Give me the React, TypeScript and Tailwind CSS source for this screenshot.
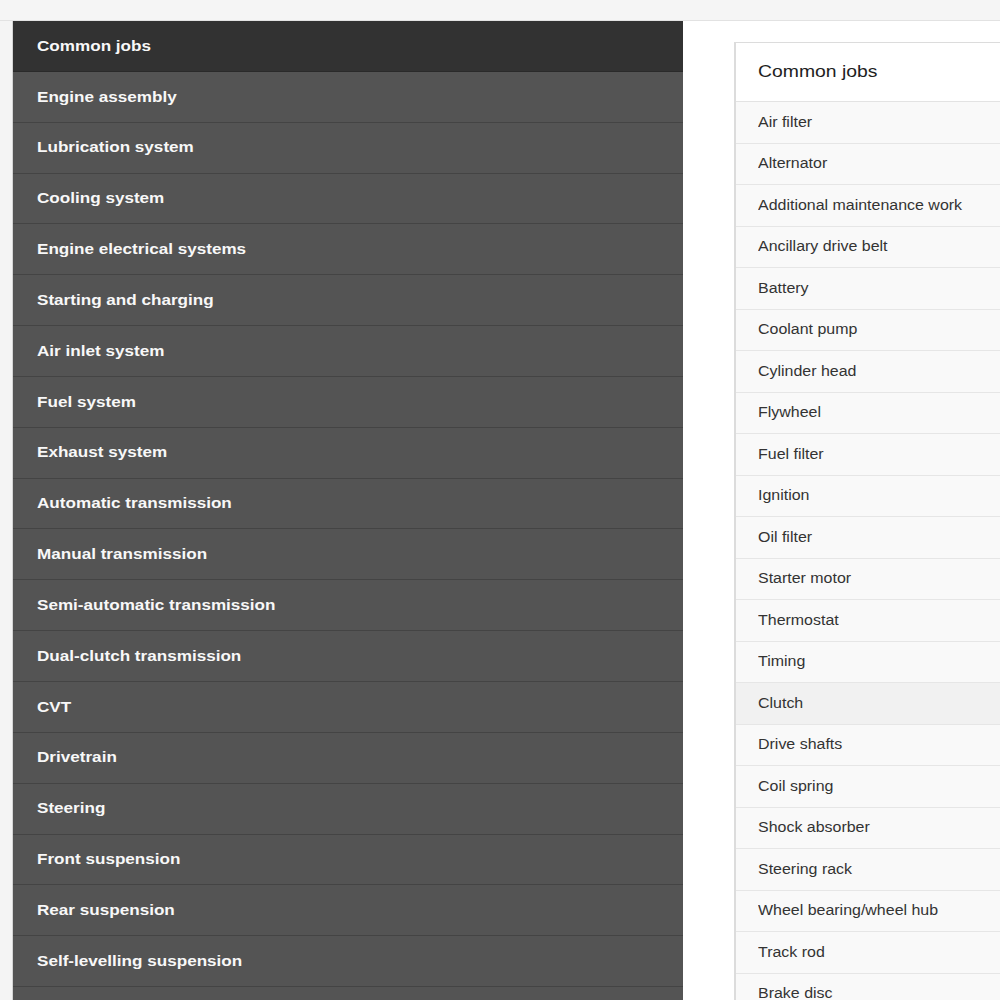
const groups = [
    "Common jobs",
    "Engine assembly",
    "Lubrication system",
    "Cooling system",
    "Engine electrical systems",
    "Starting and charging",
    "Air inlet system",
    "Fuel system",
    "Exhaust system",
    "Automatic transmission",
    "Manual transmission",
    "Semi-automatic transmission",
    "Dual-clutch transmission",
    "CVT",
    "Drivetrain",
    "Steering",
    "Front suspension",
    "Rear suspension",
    "Self-levelling suspension",
    "Brakes",
]

const jobs = [
    "Air filter",
    "Alternator",
    "Additional maintenance work",
    "Ancillary drive belt",
    "Battery",
    "Coolant pump",
    "Cylinder head",
    "Flywheel",
    "Fuel filter",
    "Ignition",
    "Oil filter",
    "Starter motor",
    "Thermostat",
    "Timing",
    "Clutch",
    "Drive shafts",
    "Coil spring",
    "Shock absorber",
    "Steering rack",
    "Wheel bearing/wheel hub",
    "Track rod",
    "Brake disc",
    "Brake pads",
]

// the screenshot's text is a bit wider than plain Arial
const wide = "inline-block origin-left scale-x-[1.14] whitespace-nowrap"

export default function App() {
    return (
        <div className="h-screen w-full overflow-hidden bg-[#f4f4f4] font-['Liberation_Sans',Arial,sans-serif]">
            <div className="h-[21px] border-b border-[#e2e2e2] bg-[#f5f5f5]"></div>
            <div className="ml-[12px] flex border-l border-[#d4d4d4] bg-white">
                {/* left menu */}
                <div className="w-[670px] shrink-0 bg-[#545454]">
                    {groups.map((g, i) => (
                        <div key={g}
                             className={(i === 0 ? "bg-[#323232] border-[#2a2a2a] " : "bg-[#545454] border-[#444444] ") +
                                 "h-[50.85px] border-b flex items-center pl-[24px] text-[15px] font-bold text-[#f8f8f8]"}>
                            <span className={wide}>{g}</span>
                        </div>
                    ))}
                </div>

                {/* right panel */}
                <div className="flex-1 overflow-hidden bg-white pl-[51px] pt-[21px]">
                    <div className="w-[400px] border-t border-l-2 border-[#dcdcdc] bg-white">
                        <div className="h-[59px] flex items-center pl-[22px] text-[17px] text-[#1e1e1e] border-b border-[#e3e3e3]">
                            <span className={wide}>Common jobs</span>
                        </div>
                        {jobs.map((j) => (
                            <div key={j}
                                 className={(j === "Clutch" ? "bg-[#f1f1f1] " : "bg-[#f9f9f9] ") +
                                     "h-[41.5px] border-b border-[#e6e6e6] flex items-center pl-[22px] text-[14px] text-[#333]"}>
                                <span className={wide}>{j}</span>
                            </div>
                        ))}
                    </div>
                </div>
            </div>
        </div>
    )
}
